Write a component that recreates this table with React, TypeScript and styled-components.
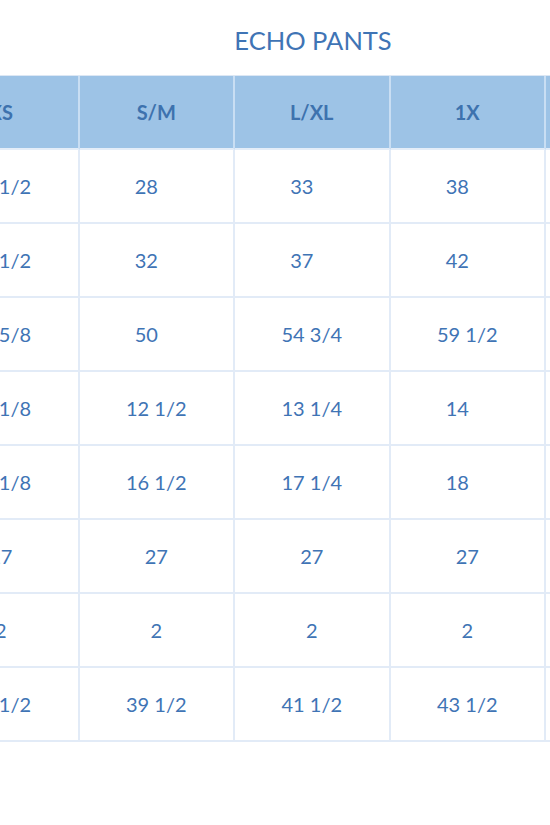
import styled, { createGlobalStyle } from "styled-components";

const GlobalStyle = createGlobalStyle`
  html, body {
    margin: 0;
    padding: 0;
    background: #ffffff;
    overflow: hidden;
  }
  body {
    font-family: Lato, "Open Sans", "Liberation Sans", sans-serif;
  }
`;

const Page = styled.div`
  width: 550px;
  height: 825px;
  overflow: hidden;
  background: #ffffff;
`;

const Title = styled.h1`
  margin: 0;
  padding: 25px 0 0 76px;
  height: 75px;
  box-sizing: border-box;
  text-align: center;
  font-size: 25.5px;
  font-weight: 400;
  color: #3f74b5;
  line-height: 30px;
`;

const Grid = styled.div`
  display: grid;
  grid-template-columns: repeat(6, 155.5px);
  grid-auto-rows: 74px;
  margin-left: -76px;
  width: max-content;
  border-top: 1px solid #dce7f4;
`;

const Cell = styled.div<{ $head?: boolean; $shift?: number }>`
  display: flex;
  align-items: center;
  justify-content: center;
  box-sizing: border-box;
  padding-right: ${(p) => (p.$shift ? `${p.$shift}px` : "0")};
  background: ${(p) => (p.$head ? "#9dc3e6" : "#ffffff")};
  border-right: 2px solid ${(p) => (p.$head ? "#c9def3" : "#e2ebf7")};
  border-bottom: 2px solid ${(p) => (p.$head ? "#e4edf8" : "#e2ebf7")};
  color: ${(p) => (p.$head ? "#3d72ae" : "#3f74b5")};
  font-size: ${(p) => (p.$head ? "20px" : "20px")};
  font-weight: ${(p) => (p.$head ? 700 : 400)};
  white-space: nowrap;
`;

const headers = ["XS", "S/M", "L/XL", "1X", "2X", "3X"];

// trailing "!" marks values that sit a little left of centre in the chart
const rows = [
  ["24 1/2", "28!", "33!", "38!", "43!", "48!"],
  ["28 1/2", "32!", "37!", "42!", "47!", "52!"],
  ["45 5/8", "50!", "54 3/4", "59 1/2", "64 1/4", "69"],
  ["11 1/8", "12 1/2", "13 1/4", "14!", "14 3/4", "15 1/2"],
  ["15 1/8", "16 1/2", "17 1/4", "18!", "18 3/4", "19 1/2"],
  ["27", "27", "27", "27", "27", "27"],
  ["2", "2", "2", "2", "2", "2"],
  ["37 1/2", "39 1/2", "41 1/2", "43 1/2", "45 1/2", "47 1/2"],
];

const App = () => {
  return (
    <Page>
      <GlobalStyle />
      <Title>ECHO PANTS</Title>
      <Grid>
        {headers.map((h) => (
          <Cell key={h} $head>
            {h}
          </Cell>
        ))}
        {rows.map((row, i) =>
          row.map((v, j) => {
            const shifted = v.endsWith("!");
            return (
              <Cell key={`${i}-${j}`} $shift={shifted ? 20 : 0}>
                {shifted ? v.slice(0, -1) : v}
              </Cell>
            );
          })
        )}
      </Grid>
    </Page>
  );
};

export default App;
